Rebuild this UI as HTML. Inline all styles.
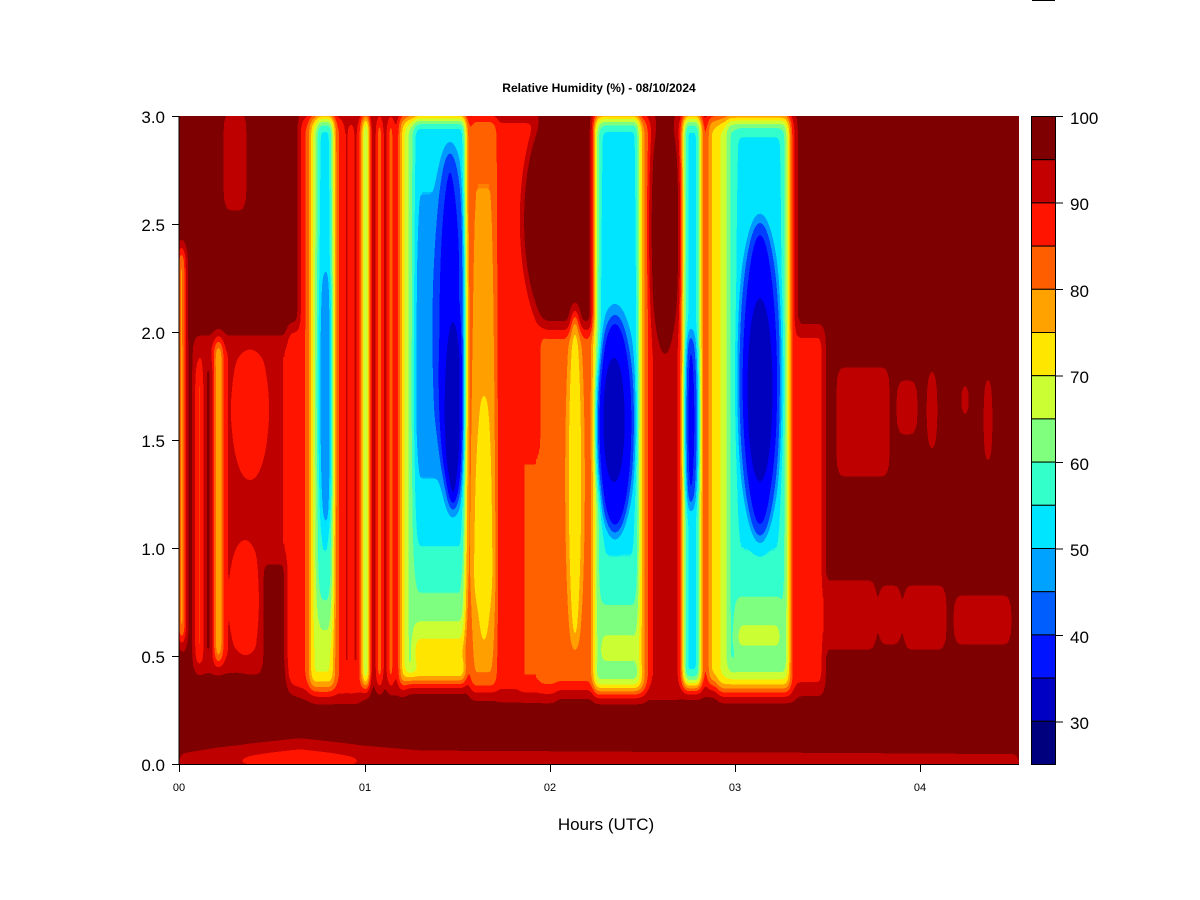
<!DOCTYPE html>
<html><head><meta charset="utf-8"><style>
html,body{margin:0;padding:0;background:#fff;}
svg{display:block;}
text{font-family:"Liberation Sans",Arial,sans-serif;fill:#000;}
</style></head><body>
<svg width="1200" height="900" viewBox="0 0 1200 900" xmlns="http://www.w3.org/2000/svg">
<defs>
<clipPath id="pc"><rect x="179" y="116" width="840" height="648"/></clipPath>
<filter id="jet" filterUnits="userSpaceOnUse" x="100" y="60" width="1000" height="760" color-interpolation-filters="sRGB">
<feGaussianBlur stdDeviation="3 9"/>
<feComponentTransfer>
<feFuncR type="discrete" tableValues="0 0 0 0 0 0 0.2 0.5 0.8 1 1 1 1 0.75 0.5"/>
<feFuncG type="discrete" tableValues="0 0 0 0.25 0.6 0.9 1 1 1 0.9 0.63 0.38 0.08 0 0"/>
<feFuncB type="discrete" tableValues="0.5 0.75 1 1 1 1 0.8 0.5 0.2 0 0 0 0 0 0"/>
<feFuncA type="identity"/>
</feComponentTransfer>
</filter>
<linearGradient id="gMain" x1="0" y1="0" x2="0" y2="1">
<stop offset="0" stop-color="rgb(92,92,92)"/><stop offset="0.3" stop-color="rgb(76,76,76)"/>
<stop offset="0.55" stop-color="rgb(72,72,72)"/><stop offset="0.75" stop-color="rgb(95,95,95)"/>
<stop offset="0.9" stop-color="rgb(125,125,125)"/><stop offset="1" stop-color="rgb(180,180,180)"/>
</linearGradient>
<linearGradient id="gSide" x1="0" y1="0" x2="0" y2="1">
<stop offset="0" stop-color="rgb(98,98,98)"/><stop offset="0.5" stop-color="rgb(84,84,84)"/>
<stop offset="0.85" stop-color="rgb(104,104,104)"/><stop offset="1" stop-color="rgb(150,150,150)"/>
</linearGradient>
<linearGradient id="gOr" x1="0" y1="0" x2="0" y2="1">
<stop offset="0" stop-color="rgb(190,190,190)"/><stop offset="0.35" stop-color="rgb(180,180,180)"/>
<stop offset="0.8" stop-color="rgb(165,165,165)"/><stop offset="1" stop-color="rgb(190,190,190)"/>
</linearGradient>
</defs>
<g clip-path="url(#pc)">
<g filter="url(#jet)">
<rect x="120" y="80" width="960" height="720" fill="rgb(245,245,245)"/>
<!-- left region -->
<rect x="185" y="340" width="115" height="330" fill="rgb(221,221,221)"/>
<rect x="225" y="116" width="20" height="90" fill="rgb(221,221,221)"/>
<rect x="186" y="330" width="8" height="340" fill="rgb(245,245,245)"/>
<rect x="205" y="360" width="7" height="300" fill="rgb(245,245,245)"/>
<rect x="262" y="560" width="24" height="110" fill="rgb(245,245,245)"/>
<ellipse cx="250" cy="410" rx="14" ry="55" fill="rgb(205,205,205)"/>
<ellipse cx="245" cy="600" rx="12" ry="45" fill="rgb(205,205,205)"/>
<rect x="179" y="250" width="5" height="390" fill="rgb(150,150,150)"/>
<rect x="197" y="370" width="4" height="290" fill="rgb(185,185,185)"/>
<rect x="215" y="340" width="7" height="320" fill="rgb(160,160,160)"/>
<rect x="288" y="330" width="22" height="360" fill="rgb(205,205,205)"/>
<!-- col 6 -->
<rect x="300" y="116" width="62" height="580" fill="rgb(205,205,205)"/>
<rect x="310" y="116" width="24" height="570" fill="rgb(150,150,150)"/>
<rect x="317" y="116" width="16" height="540" fill="url(#gSide)"/>
<ellipse cx="326" cy="400" rx="6" ry="130" fill="rgb(70,70,70)"/>
<rect x="345" y="116" width="3" height="560" fill="rgb(245,245,245)"/>
<rect x="354" y="116" width="3" height="560" fill="rgb(245,245,245)"/>
<rect x="363" y="116" width="6" height="570" fill="rgb(100,100,100)"/>
<rect x="372" y="116" width="4" height="580" fill="rgb(245,245,245)"/>
<rect x="377" y="116" width="5" height="570" fill="rgb(170,170,170)"/>
<rect x="383" y="116" width="4" height="580" fill="rgb(245,245,245)"/>
<rect x="388" y="116" width="5" height="570" fill="rgb(175,175,175)"/>
<rect x="394" y="116" width="4" height="580" fill="rgb(230,230,230)"/>
<rect x="399" y="116" width="7" height="570" fill="rgb(160,160,160)"/>
<!-- main blue col -->
<rect x="406" y="116" width="62" height="565" fill="rgb(130,130,130)"/>
<rect x="414" y="116" width="52" height="550" fill="url(#gMain)"/>
<ellipse cx="450" cy="320" rx="16" ry="170" fill="rgb(50,50,50)"/>
<ellipse cx="453" cy="410" rx="11" ry="100" fill="rgb(30,30,30)"/>
<rect x="466" y="116" width="4" height="570" fill="rgb(225,225,225)"/>
<rect x="470" y="116" width="28" height="575" fill="url(#gOr)"/>
<ellipse cx="484" cy="520" rx="6" ry="130" fill="rgb(160,160,160)"/>
<!-- red mid -->
<rect x="496" y="116" width="60" height="580" fill="rgb(214,214,214)"/>
<rect x="520" y="450" width="22" height="240" fill="rgb(203,203,203)"/>
<ellipse cx="560" cy="220" rx="38" ry="120" fill="rgb(245,245,245)"/>
<ellipse cx="598" cy="180" rx="8" ry="40" fill="rgb(245,245,245)"/>
<rect x="540" y="330" width="60" height="360" fill="rgb(196,196,196)"/>
<ellipse cx="575" cy="480" rx="8" ry="170" fill="rgb(160,160,160)"/>
<!-- blue col 2 -->
<rect x="594" y="116" width="52" height="575" fill="rgb(125,125,125)"/>
<rect x="600" y="116" width="38" height="545" fill="url(#gSide)"/>
<ellipse cx="615" cy="425" rx="19" ry="110" fill="rgb(42,42,42)"/>
<ellipse cx="614" cy="420" rx="11" ry="65" fill="rgb(26,26,26)"/>
<rect x="640" y="116" width="8" height="570" fill="rgb(185,185,185)"/>
<rect x="648" y="116" width="34" height="580" fill="rgb(222,222,222)"/>
<ellipse cx="665" cy="230" rx="16" ry="130" fill="rgb(245,245,245)"/>
<!-- stripes -->
<rect x="683" y="116" width="18" height="570" fill="rgb(98,98,98)"/>
<ellipse cx="691" cy="420" rx="7" ry="90" fill="rgb(45,45,45)"/>
<rect x="701" y="116" width="7" height="575" fill="rgb(218,218,218)"/>
<rect x="708" y="116" width="10" height="570" fill="rgb(165,165,165)"/>
<!-- blue col 3 -->
<rect x="718" y="116" width="76" height="575" fill="rgb(150,150,150)"/>
<rect x="727" y="116" width="60" height="555" fill="rgb(115,115,115)"/>
<rect x="736" y="130" width="46" height="520" fill="url(#gSide)"/>
<ellipse cx="760" cy="380" rx="21" ry="160" fill="rgb(48,48,48)"/>
<ellipse cx="760" cy="390" rx="13" ry="95" fill="rgb(22,22,22)"/>
<rect x="790" y="116" width="6" height="580" fill="rgb(215,215,215)"/>
<rect x="796" y="330" width="28" height="360" fill="rgb(215,215,215)"/>
<!-- right patches -->
<rect x="838" y="372" width="50" height="100" fill="rgb(221,221,221)"/>
<rect x="898" y="385" width="18" height="45" fill="rgb(221,221,221)"/>
<ellipse cx="932" cy="410" rx="4" ry="40" fill="rgb(221,221,221)"/>
<ellipse cx="965" cy="400" rx="3" ry="15" fill="rgb(221,221,221)"/>
<ellipse cx="988" cy="420" rx="3" ry="45" fill="rgb(221,221,221)"/>
<rect x="825" y="585" width="50" height="60" fill="rgb(221,221,221)"/>
<rect x="880" y="590" width="20" height="50" fill="rgb(221,221,221)"/>
<rect x="905" y="590" width="40" height="55" fill="rgb(221,221,221)"/>
<rect x="955" y="600" width="55" height="40" fill="rgb(221,221,221)"/>
<!-- bottom -->
<path d="M179 672 L240 668 L300 690 L340 705 L460 705 L600 706 L700 712 L800 708 L1019 700 L1019 764 L179 764 Z" fill="rgb(245,245,245)"/>
<path d="M179 760 L220 754 L300 745 L360 752 L420 757 L1019 760 L1019 770 L179 770 Z" fill="rgb(212,212,212)"/>
<ellipse cx="300" cy="762" rx="60" ry="8" fill="rgb(205,205,205)"/>
</g>
</g>
<!-- axes -->
<line x1="179" y1="116" x2="179" y2="764" stroke="#000" stroke-width="1"/>
<line x1="179" y1="764.5" x2="1019" y2="764.5" stroke="#000" stroke-width="1"/>
<g stroke="#000" stroke-width="1">
<line x1="172" y1="116.5" x2="179" y2="116.5"/><line x1="172" y1="224.5" x2="179" y2="224.5"/>
<line x1="172" y1="332.5" x2="179" y2="332.5"/><line x1="172" y1="440.5" x2="179" y2="440.5"/>
<line x1="172" y1="548.5" x2="179" y2="548.5"/><line x1="172" y1="656.5" x2="179" y2="656.5"/>
<line x1="172" y1="764.5" x2="179" y2="764.5"/>
<line x1="179.5" y1="764" x2="179.5" y2="772"/><line x1="365.5" y1="764" x2="365.5" y2="772"/>
<line x1="550.5" y1="764" x2="550.5" y2="772"/><line x1="735.5" y1="764" x2="735.5" y2="772"/>
<line x1="920.5" y1="764" x2="920.5" y2="772"/>
</g>
<g font-size="17" text-anchor="end">
<text x="165" y="123">3.0</text><text x="165" y="231">2.5</text><text x="165" y="339">2.0</text>
<text x="165" y="447">1.5</text><text x="165" y="555">1.0</text><text x="165" y="663">0.5</text>
<text x="165" y="771">0.0</text>
</g>
<g font-size="11" text-anchor="middle">
<text x="179" y="791">00</text><text x="365" y="791">01</text><text x="550" y="791">02</text>
<text x="735" y="791">03</text><text x="920" y="791">04</text>
</g>
<text x="606" y="830" font-size="17" text-anchor="middle">Hours (UTC)</text>
<text x="599" y="92" font-size="12" font-weight="bold" text-anchor="middle">Relative Humidity (%) - 08/10/2024</text>
<!-- colorbar -->
<g stroke="#000" stroke-width="1">
<rect x="1031.5" y="116.5" width="24" height="43.2" fill="#7f0000"/>
<rect x="1031.5" y="159.7" width="24" height="43.2" fill="#c40000"/>
<rect x="1031.5" y="202.9" width="24" height="43.2" fill="#ff1400"/>
<rect x="1031.5" y="246.1" width="24" height="43.2" fill="#ff5e00"/>
<rect x="1031.5" y="289.3" width="24" height="43.2" fill="#ffa200"/>
<rect x="1031.5" y="332.5" width="24" height="43.2" fill="#ffe600"/>
<rect x="1031.5" y="375.7" width="24" height="43.2" fill="#cbff33"/>
<rect x="1031.5" y="418.9" width="24" height="43.2" fill="#80ff7f"/>
<rect x="1031.5" y="462.1" width="24" height="43.2" fill="#33ffcb"/>
<rect x="1031.5" y="505.3" width="24" height="43.2" fill="#00e5ff"/>
<rect x="1031.5" y="548.5" width="24" height="43.2" fill="#00a2ff"/>
<rect x="1031.5" y="591.7" width="24" height="43.2" fill="#005eff"/>
<rect x="1031.5" y="634.9" width="24" height="43.2" fill="#0014ff"/>
<rect x="1031.5" y="678.1" width="24" height="43.2" fill="#0000c4"/>
<rect x="1031.5" y="721.3" width="24" height="43.2" fill="#00007f"/>
<line x1="1055" y1="116.5" x2="1063" y2="116.5"/><line x1="1055" y1="203" x2="1063" y2="203"/>
<line x1="1055" y1="289.5" x2="1063" y2="289.5"/><line x1="1055" y1="376" x2="1063" y2="376"/>
<line x1="1055" y1="462.5" x2="1063" y2="462.5"/><line x1="1055" y1="549" x2="1063" y2="549"/>
<line x1="1055" y1="635.5" x2="1063" y2="635.5"/><line x1="1055" y1="722" x2="1063" y2="722"/>
</g>
<g font-size="17">
<text x="1070" y="124">100</text><text x="1070" y="210">90</text><text x="1070" y="297">80</text>
<text x="1070" y="383">70</text><text x="1070" y="470">60</text><text x="1070" y="556">50</text>
<text x="1070" y="643">40</text><text x="1070" y="729">30</text>
</g>
<line x1="1032" y1="0.5" x2="1055" y2="0.5" stroke="#000" stroke-width="1"/>
</svg>
</body></html>
